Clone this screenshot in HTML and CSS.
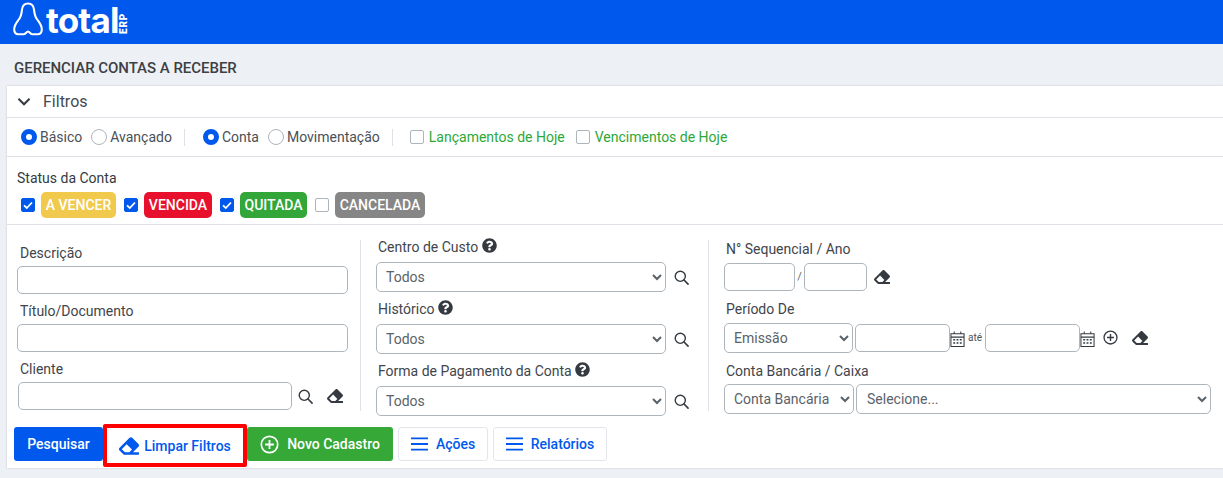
FILE: index.html
```html
<!DOCTYPE html>
<html lang="pt-BR">
<head>
<meta charset="utf-8">
<title>Gerenciar Contas a Receber</title>
<link rel="stylesheet" href="styles.css">
</head>
<body>
<svg class="defs" width="0" height="0" aria-hidden="true">
  <symbol id="i-eraser" viewBox="0 0 512 512"><path fill="currentColor" d="M497.941 273.941c18.745-18.745 18.745-49.137 0-67.882l-160-160c-18.745-18.745-49.136-18.746-67.883 0l-256 256c-18.745 18.745-18.745 49.137 0 67.882l96 96A48.004 48.004 0 0 0 144 480h356c6.627 0 12-5.373 12-12v-40c0-6.627-5.373-12-12-12H355.883l142.058-142.059zm-302.627-62.627l137.373 137.373L265.373 416H150.628l-80-80 124.686-124.686z"/></symbol>
  <symbol id="i-help" viewBox="0 0 512 512"><path fill="currentColor" d="M504 256c0 136.997-111.043 248-248 248S8 392.997 8 256C8 119.083 119.043 8 256 8s248 111.083 248 248zM262.655 90c-54.497 0-89.255 22.957-116.549 63.758-3.536 5.286-2.353 12.415 2.715 16.258l34.699 26.31c5.205 3.947 12.621 3.008 16.665-2.122 17.864-22.658 30.113-35.797 57.303-35.797 20.429 0 45.698 13.148 45.698 32.958 0 14.976-12.363 22.667-32.534 33.976C247.128 238.528 216 254.941 216 296v4c0 6.627 5.373 12 12 12h56c6.627 0 12-5.373 12-12v-1.333c0-28.462 83.186-29.647 83.186-106.667 0-58.002-60.165-102-116.531-102zM256 338c-25.365 0-46 20.635-46 46 0 25.364 20.635 46 46 46s46-20.636 46-46c0-25.365-20.635-46-46-46z"/></symbol>
  <symbol id="i-search" viewBox="0 0 16 16"><circle cx="6.700" cy="6.700" r="5.400" fill="none" stroke="currentColor" stroke-width="1.500"/><path d="M10.700 10.700 15 15" stroke="currentColor" stroke-width="1.700" stroke-linecap="round"/></symbol>
  <symbol id="i-plus" viewBox="0 0 16 16"><circle cx="8" cy="8" r="6.900" fill="none" stroke="currentColor" stroke-width="1.400"/><path d="M8 4.300v7.400M4.300 8h7.400" stroke="currentColor" stroke-width="1.500"/></symbol>
  <symbol id="i-menu" viewBox="0 0 18 16"><path d="M0 2h18M0 8h18M0 14h18" stroke="currentColor" stroke-width="2"/></symbol>
  <symbol id="i-cal" viewBox="0 0 16 18"><path d="M1 3.500h14v13.500H1zM1 7h14M4.500 1v3M11.500 1v3" fill="none" stroke="currentColor" stroke-width="1.100"/><path d="M3.500 9h2v1.500h-2zM7 9h2v1.500H7zM10.500 9h2v1.500h-2zM3.500 12.500h2V14h-2zM7 12.500h2V14H7zM10.500 12.500h2V14h-2z" fill="currentColor"/></symbol>
</svg>

<header class="topbar">
  <div class="logo">
    <svg class="logo-mark" viewBox="0 0 30 34" aria-hidden="true"><path d="M15 1.500c3 0 5.500 1.800 6 6 .4 3.500.6 6.500 2.800 9.500 1.800 2.500 5 5.500 5 10.500 0 3-1.800 4.700-4.300 4.700h-5.500c-1.800 0-2.400-2.700-4-2.700s-2.200 2.700-4 2.700H5.500C3 32.200 1.200 30.500 1.200 27.500c0-5 3.200-8 5-10.500C8.400 14 8.600 11 9 7.500c.5-4.200 3-6 6-6z" fill="none" stroke="#fff" stroke-width="2.100" stroke-linejoin="round"/></svg>
    <span class="logo-text">total</span>
    <span class="logo-erp">ERP</span>
  </div>
</header>

<main class="page">
  <h1 class="page-title">GERENCIAR CONTAS A RECEBER</h1>

  <section class="card">
    <div class="card-head">
      <svg class="chevron" viewBox="0 0 14 10" aria-hidden="true"><path d="M1.500 1.800 7 7.300l5.500-5.500" fill="none" stroke="currentColor" stroke-width="2"/></svg>
      <span>Filtros</span>
    </div>

    <div class="options">
      <label class="opt"><input class="radio" type="radio" name="modo" checked>Básico</label>
      <label class="opt"><input class="radio" type="radio" name="modo">Avançado</label>
      <span class="vsep"></span>
      <label class="opt"><input class="radio" type="radio" name="tipo" checked>Conta</label>
      <label class="opt"><input class="radio" type="radio" name="tipo">Movimentação</label>
      <span class="vsep"></span>
      <label class="opt opt-green"><input class="check" type="checkbox">Lançamentos de Hoje</label>
      <label class="opt opt-green"><input class="check" type="checkbox">Vencimentos de Hoje</label>
    </div>

    <div class="status">
      <div class="status-title">Status da Conta</div>
      <div class="status-row">
        <input class="check" type="checkbox" checked><span class="tag tag-yellow">A VENCER</span>
        <input class="check" type="checkbox" checked><span class="tag tag-red">VENCIDA</span>
        <input class="check" type="checkbox" checked><span class="tag tag-green">QUITADA</span>
        <input class="check" type="checkbox"><span class="tag tag-gray">CANCELADA</span>
      </div>
    </div>

    <div class="form">
      <div class="col col-1">
        <label class="lbl lbl-a">Descrição</label>
        <input class="ctl w-full" type="text">
        <label class="lbl lbl-b">Título/Documento</label>
        <input class="ctl w-full" type="text">
        <label class="lbl lbl-b">Cliente</label>
        <div class="line">
          <input class="ctl w-client" type="text">
          <svg class="ico ico-search ico-search-client"><use href="#i-search"/></svg>
          <svg class="ico ico-eraser"><use href="#i-eraser"/></svg>
        </div>
      </div>

      <div class="col col-2">
        <label class="lbl lbl-c">Centro de Custo <svg class="help"><use href="#i-help"/></svg></label>
        <div class="line">
          <select class="ctl sel w-sel"><option>Todos</option></select>
          <svg class="ico ico-search"><use href="#i-search"/></svg>
        </div>
        <label class="lbl lbl-d">Histórico <svg class="help"><use href="#i-help"/></svg></label>
        <div class="line">
          <select class="ctl sel w-sel"><option>Todos</option></select>
          <svg class="ico ico-search"><use href="#i-search"/></svg>
        </div>
        <label class="lbl lbl-d">Forma de Pagamento da Conta <svg class="help"><use href="#i-help"/></svg></label>
        <div class="line">
          <select class="ctl sel w-sel"><option>Todos</option></select>
          <svg class="ico ico-search"><use href="#i-search"/></svg>
        </div>
      </div>

      <div class="col col-3">
        <label class="lbl lbl-e">N° Sequencial / Ano</label>
        <div class="line">
          <input class="ctl w-seq" type="text">
          <span class="slash">/</span>
          <input class="ctl w-ano" type="text">
          <svg class="ico ico-eraser ico-eraser-seq"><use href="#i-eraser"/></svg>
        </div>
        <label class="lbl lbl-f">Período De</label>
        <div class="line line-periodo">
          <select class="ctl sel w-periodo"><option>Emissão</option></select>
          <input class="ctl w-date" type="text">
          <svg class="cal"><use href="#i-cal"/></svg>
          <span class="ate">até</span>
          <input class="ctl w-date" type="text">
          <svg class="cal"><use href="#i-cal"/></svg>
          <svg class="ico-add"><use href="#i-plus"/></svg>
          <svg class="ico ico-eraser ico-eraser-per"><use href="#i-eraser"/></svg>
        </div>
        <label class="lbl lbl-g">Conta Bancária / Caixa</label>
        <div class="line line-conta">
          <select class="ctl sel w-conta"><option>Conta Bancária</option></select>
          <select class="ctl sel w-selecione"><option>Selecione...</option></select>
        </div>
      </div>
    </div>

    <div class="actions">
      <button class="btn btn-primary" type="button">Pesquisar</button>
      <button class="btn btn-light btn-marked" type="button"><svg class="btn-eraser"><use href="#i-eraser"/></svg>Limpar Filtros</button>
      <button class="btn btn-success" type="button"><svg class="btn-plus"><use href="#i-plus"/></svg>Novo Cadastro</button>
      <button class="btn btn-light" type="button"><svg class="btn-menu"><use href="#i-menu"/></svg>Ações</button>
      <button class="btn btn-light" type="button"><svg class="btn-menu"><use href="#i-menu"/></svg>Relatórios</button>
    </div>
  </section>
</main>
</body>
</html>
```
FILE: styles.css
```css
* { box-sizing: border-box; }
html, body { height: 100%; }
body {
  margin: 0;
  background: #edf0f5;
  color: #343a40;
  font-family: Roboto, "Liberation Sans", sans-serif;
  font-size: 14px;
  line-height: 20px;
  overflow: hidden;
}
.defs { position: absolute; }

.topbar { height: 44px; background: #0059ec; padding: 2px 0 0 13px; }
.logo { display: flex; align-items: flex-start; color: #fff; }
.logo-mark { width: 30px; height: 34px; flex: none; }
.logo-text {
  font-family: Inter, Roboto, sans-serif;
  font-weight: 700;
  font-size: 35px;
  line-height: 38px;
  letter-spacing: -0.8px;
  margin: -1px 0 0 3px;
}
.logo-erp {
  writing-mode: vertical-rl;
  transform: rotate(180deg);
  font-weight: 900;
  font-size: 10px;
  line-height: 10px;
  letter-spacing: 0.8px;
  margin: 8px 0 0 0;
  height: 26px;
  text-align: center;
}

.page { padding: 0 0 0 7px; }
.page-title {
  margin: 0;
  height: 42px;
  padding: 14px 0 0 7px;
  font-size: 15px;
  line-height: 20px;
  font-weight: 500;
  letter-spacing: -0.03px;
  color: #3c4043;
}
.card {
  background: #fff;
  height: 382px;
  box-shadow: 0 0 2px rgba(0, 0, 0, .18);
}
.card-head {
  display: flex;
  align-items: center;
  height: 32px;
  border-bottom: 1px solid #dee2e6;
  padding-left: 10px;
  font-size: 16px;
  color: #444a50;
}
.chevron { width: 14px; height: 10px; margin-right: 12px; color: #343a40; }

.options {
  display: flex;
  align-items: center;
  height: 39px;
  padding: 0 0 0 14px;
  border-bottom: 1px solid #dee2e6;
}
.opt { display: flex; align-items: center; margin-right: 9px; white-space: nowrap; color: #495057; }
.opt-green { color: #2ea836; margin-right: 11px; }
.radio {
  appearance: none;
  width: 16px;
  height: 16px;
  margin: 0 3px 0 0;
  border: 1px solid #adb5bd;
  border-radius: 50%;
  background: #fff;
}
.radio:checked { border: 5px solid #0059ec; }
.vsep { width: 1px; height: 17px; background: #dee2e6; margin: 0 18px 0 3px; }
.vsep:nth-of-type(2) { margin-left: 3px; margin-right: 17px; }
.check {
  appearance: none;
  flex: none;
  width: 14px;
  height: 14px;
  margin: 0 5px 0 0;
  border: 1px solid #adb5bd;
  border-radius: 2px;
  background: #fff;
}
.check:checked {
  border-color: #0059ec;
  background: #0059ec url("data:image/svg+xml,%3Csvg xmlns='http://www.w3.org/2000/svg' viewBox='0 0 14 14'%3E%3Cpath d='M3 7.300 5.800 10 11 4.500' fill='none' stroke='%23fff' stroke-width='1.800'/%3E%3C/svg%3E") center / 14px no-repeat;
}

.status { height: 68px; border-bottom: 1px solid #dee2e6; padding: 11px 0 0 10px; }
.status-title { height: 20px; }
.status-row { display: flex; align-items: center; padding: 4px 0 0 4px; }
.status-row .check { margin-right: 6px; }
.tag {
  display: flex;
  align-items: center;
  justify-content: center;
  height: 26px;
  border-radius: 5px;
  margin-right: 8px;
  color: #fff;
  font-weight: 500;
  font-size: 14px;
}
.tag-yellow { width: 75px; background: #f0c94d; }
.tag-red { width: 68px; background: #e8112d; }
.tag-green { width: 67px; background: #32a639; }
.tag-gray { width: 90px; background: #868686; }

.form { display: flex; height: 202px; padding-top: 15px; }
.col { height: 171px; }
.col-1 { width: 354px; padding-left: 10px; border-right: 1px solid #dee2e6; }
.col-2 { width: 348px; padding-left: 15px; border-right: 1px solid #dee2e6; }
.col-3 { flex: 1; padding-left: 15px; }

.lbl { display: block; height: 20px; color: #3f454b; padding-left: 2px; }
.col-1 .lbl { padding-left: 3px; }
.lbl-a { margin-top: 3px; margin-bottom: 3px; }
.lbl-b { margin-top: 7px; margin-bottom: 3px; }
.lbl-c { margin-top: -3px; margin-bottom: 5px; }
.lbl-d { margin-top: 7px; margin-bottom: 5px; }
.lbl-e { margin-top: -1px; margin-bottom: 4px; }
.lbl-f { margin-top: 8px; margin-bottom: 4px; }
.lbl-g { margin-top: 8px; margin-bottom: 3px; }
.help { width: 15px; height: 15px; vertical-align: -1px; color: #343a40; }

.line { display: flex; align-items: center; }
.ctl {
  display: block;
  height: 28px;
  padding: 0 9px;
  border: 1px solid #adb5bd;
  border-radius: 5px;
  background: #fff;
  color: #5a6268;
  font-family: inherit;
  font-size: 14px;
}
.sel { height: 30px; padding-left: 5px; }
.w-full { width: 331px; }
.w-client { width: 274px; margin-left: 1px; }
.w-sel { width: 290px; }
.w-seq { width: 71px; }
.w-ano { width: 63px; }
.slash { width: 9px; text-align: center; font-size: 11px; color: #5a6268; }
.w-periodo { width: 129px; margin-right: 2px; }
.w-date { width: 95px; }
.w-conta { width: 130px; padding-right: 0; margin-right: 2px; }
.w-selecione { width: 355px; padding-left: 6px; }

.ico { flex: none; color: #343a40; }
.ico-search { width: 15px; height: 15px; margin-left: 8px; }
.ico-search-client { margin-left: 6px; }
.ico-eraser { width: 16px; height: 16px; margin-left: 14px; }
.ico-eraser-seq { margin-left: 7px; }
.ico-eraser-per { margin-left: 14px; }
.cal { width: 15px; height: 18px; flex: none; color: #343a40; margin-top: 2px; }
.ate { width: 20px; text-align: center; font-size: 10px; color: #495057; margin-top: -1px; }
.ico-add { width: 15px; height: 15px; flex: none; margin-left: 8px; margin-top: -1px; color: #343a40; }

.actions { display: flex; align-items: flex-start; height: 34px; padding-left: 7px; }
.btn {
  display: flex;
  align-items: center;
  justify-content: center;
  flex: none;
  height: 34px;
  padding: 0;
  border: 1px solid transparent;
  border-radius: 3px;
  font-family: inherit;
  font-size: 14px;
  font-weight: 500;
  white-space: nowrap;
}
.btn-primary { width: 89px; background: #0059ec; color: #fff; }
.btn-success { width: 146px; background: #35a838; color: #fff; }
.btn-light { background: #fff; color: #0059ec; border-color: #e3e6ea; width: 90px; margin-left: 5px; }
.btn-light:last-child { width: 114px; }
.btn-marked {
  width: 144px;
  height: 43px;
  margin: -3px 0 0;
  border: 4px solid #f00;
  border-radius: 2px;
}
.btn-eraser { width: 20px; height: 20px; margin-right: 5px; }
.btn-plus { width: 19px; height: 19px; margin-right: 8px; }
.btn-menu { width: 17px; height: 16px; margin-right: 8px; }
```
